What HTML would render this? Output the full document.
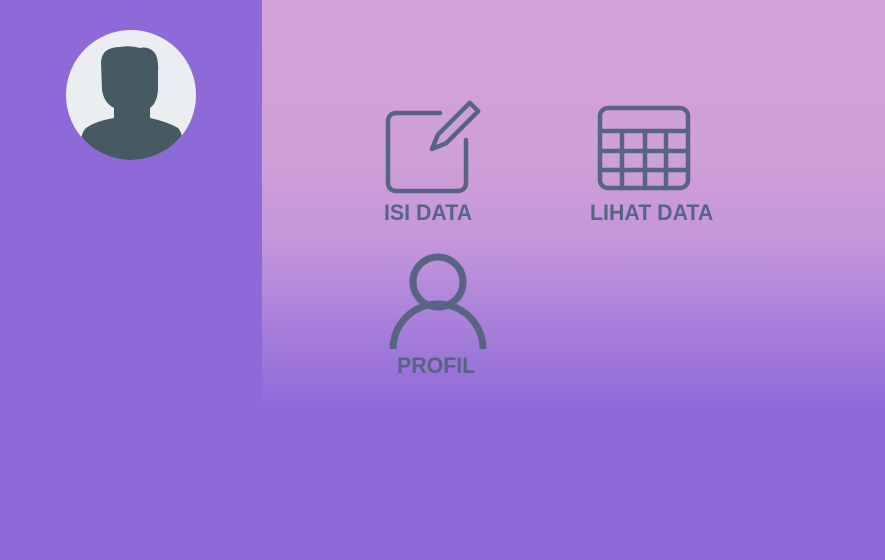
<!DOCTYPE html>
<html><head><style>
body{margin:0;width:885px;height:560px;overflow:hidden;background:#8e69d8;font-family:"Liberation Sans",sans-serif;position:relative}
.side{position:absolute;left:0;top:0;width:262px;height:560px;background:#8e69d8}
.main{position:absolute;left:262px;top:0;width:623px;height:560px;background:linear-gradient(180deg,#d3a2d8 0px,#d0a0d8 150px,#c596db 240px,#a981da 320px,#8f69d8 410px,#8e69d8 560px)}
.t{position:absolute;color:#576582;font-weight:bold;font-size:22px;letter-spacing:0px;white-space:nowrap;transform-origin:0 0;transform:scaleX(0.97)}
</style></head><body>
<div class="side"></div>
<div class="main"></div>
<svg width="885" height="560" style="position:absolute;left:0;top:0">
<defs><clipPath id="c"><circle cx="131" cy="95" r="65"/></clipPath></defs>
<circle cx="131" cy="95" r="65" fill="#ebeef1"/>
<path clip-path="url(#c)" fill="#455a63" d="M101 62 Q102 47 120 47 Q130 45 140 48 Q148 46 154 52 Q159 58 158 72 L158 90 Q157 103 150 108 L150 118 Q168 122 178 128 Q185 135 185 170 L80 170 Q78 135 86 128 Q96 121 114 118 L114 108 Q104 103 102 90 Z"/>
<g fill="none" stroke="#576582" stroke-width="4.5" stroke-linecap="round" stroke-linejoin="round">
<path d="M440 113 L397 113 Q388 113 388 122 L388 182 Q388 191 397 191 L457 191 Q466 191 466 182 L466 140"/>
<path d="M432 149 L437.8 134.8 L469.8 102.8 L478.2 111.2 L446.2 143.2 Z"/>
<rect x="600" y="108" width="88" height="80" rx="8"/>
<path d="M600 131 L688 131 M600 151 L688 151 M600 170 L688 170 M622 131 L622 188 M645 131 L645 188 M666 131 L666 188"/>
</g>
<g fill="none" stroke="#576582" stroke-width="7">
<circle cx="438" cy="282" r="25"/>
<path d="M393 349 A45 45 0 0 1 483 349"/>
</g>
</svg>
<div class="t" style="left:384px;top:200px">ISI DATA</div>
<div class="t" style="left:590px;top:200px">LIHAT DATA</div>
<div class="t" style="left:397px;top:353px">PROFIL</div>
</body></html>
